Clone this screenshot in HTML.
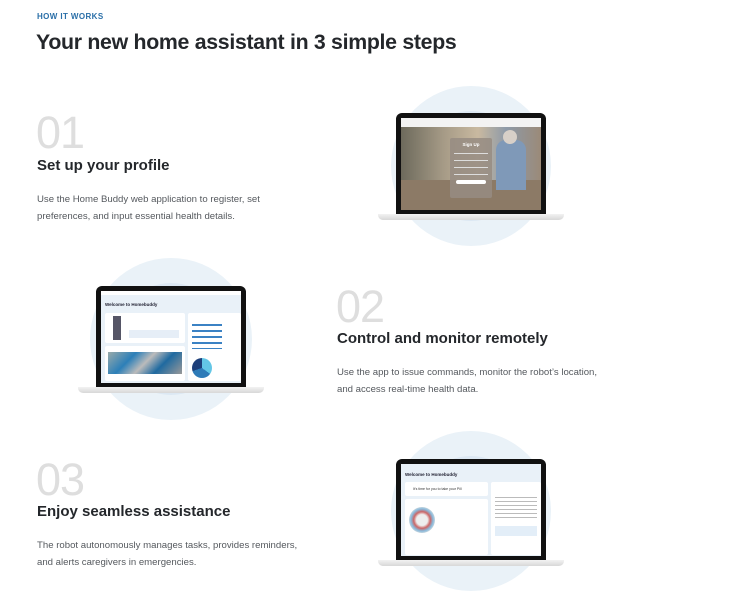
<!DOCTYPE html>
<html><head><meta charset="utf-8"><style>
*{margin:0;padding:0;box-sizing:border-box}
body{width:755px;height:607px;background:#fff;font-family:"Liberation Sans",Arial,sans-serif;position:relative;overflow:hidden}
.a{position:absolute}
.eb{left:37px;top:12px;font-size:8px;font-weight:bold;color:#2a6fa8;letter-spacing:.4px}
.t{left:36px;top:30px;font-size:21.3px;font-weight:bold;color:#24272b;letter-spacing:-.3px;white-space:nowrap}
.n{font-size:45px;color:#dedede;line-height:1;letter-spacing:-1px}
.h{font-size:15px;font-weight:bold;color:#24272b;white-space:nowrap}
.p{font-size:9.6px;color:#55595e;line-height:17px}
.c1{border-radius:50%;background:#eaf2f8}
.c2{border-radius:50%;background:#dce8f3}
.scr{background:#111;border-radius:6px 6px 0 0;overflow:hidden;padding:5px 5px 4px}
.in{width:100%;height:100%;background:#e9f1f8;position:relative;overflow:hidden}
.base{background:linear-gradient(#f2f2f2,#d8d8d8);border-radius:0 0 5px 5px;height:6px}
.card{position:absolute;background:#fff;border-radius:2px}
</style></head><body>
<div class="a eb">HOW IT WORKS</div>
<div class="a t">Your new home assistant in 3 simple steps</div>

<div class="a n" style="left:36px;top:110px">01</div>
<div class="a h" style="left:37px;top:157px">Set up your profile</div>
<div class="a p" style="left:37px;top:191px">Use the Home Buddy web application to register, set<br>preferences, and input essential health details.</div>

<div class="a n" style="left:336px;top:284px">02</div>
<div class="a h" style="left:337px;top:330px">Control and monitor remotely</div>
<div class="a p" style="left:337px;top:364px">Use the app to issue commands, monitor the robot’s location,<br>and access real-time health data.</div>

<div class="a n" style="left:36px;top:457px">03</div>
<div class="a h" style="left:37px;top:503px">Enjoy seamless assistance</div>
<div class="a p" style="left:37px;top:537px">The robot autonomously manages tasks, provides reminders,<br>and alerts caregivers in emergencies.</div>

<!-- laptop 1 -->
<div class="a c1" style="left:391px;top:86px;width:160px;height:160px"></div>
<div class="a c2" style="left:416px;top:111px;width:110px;height:110px"></div>
<div class="a scr" style="left:396px;top:113px;width:150px;height:101px">
 <div class="in" style="background:linear-gradient(90deg,#6d6a5c 0%,#a59a86 30%,#c9b9a0 55%,#8e9aa8 75%,#9b8a78 100%)">
  <div class="a" style="left:0;top:0;width:100%;height:9px;background:#f3f3f3"></div>
  <div class="a" style="left:0;top:62px;width:100%;height:30px;background:#8c7a66"></div>
  <div class="a" style="left:95px;top:22px;width:30px;height:50px;background:#7f99b8;border-radius:10px 10px 0 0"></div>
  <div class="a" style="left:102px;top:12px;width:14px;height:14px;background:#d8d0c8;border-radius:50%"></div>
  <div class="a" style="left:49px;top:20px;width:42px;height:60px;background:rgba(150,140,130,.85);border-radius:2px">
   <div style="color:#fff;font-size:4.5px;font-weight:bold;text-align:center;margin-top:4px">Sign Up</div>
   <div style="height:1px;background:#ddd;margin:6px 4px 0"></div>
   <div style="height:1px;background:#ddd;margin:6px 4px 0"></div>
   <div style="height:1px;background:#ddd;margin:6px 4px 0"></div>
   <div style="height:1px;background:#ddd;margin:6px 4px 0"></div>
   <div style="height:4px;background:#fff;border-radius:2px;margin:5px 6px 0"></div>
  </div>
 </div>
</div>
<div class="a base" style="left:378px;top:214px;width:186px"></div>

<!-- laptop 2 -->
<div class="a c1" style="left:90px;top:258px;width:162px;height:162px"></div>
<div class="a c2" style="left:115px;top:283px;width:112px;height:112px"></div>
<div class="a scr" style="left:96px;top:286px;width:150px;height:101px">
 <div class="in">
  <div class="a" style="left:0;top:0;width:100%;height:4px;background:#fff"></div>
  <div class="a" style="left:4px;top:11px;font-size:4.5px;font-weight:bold;color:#223">Welcome to Homebuddy</div>
  <div class="card" style="left:4px;top:22px;width:80px;height:30px">
   <div class="a" style="left:8px;top:3px;width:8px;height:24px;background:#556"></div>
   <div class="a" style="left:24px;top:17px;width:50px;height:8px;background:#e6eef7"></div>
  </div>
  <div class="card" style="left:4px;top:55px;width:80px;height:35px">
   <div class="a" style="left:3px;top:6px;width:74px;height:22px;background:linear-gradient(135deg,#9aa 0%,#2c7fb8 30%,#bbb 50%,#1f6aa0 70%,#999 100%)"></div>
  </div>
  <div class="card" style="left:87px;top:22px;width:53px;height:68px">
   <div class="a" style="left:4px;top:8px;width:30px;height:28px;background:repeating-linear-gradient(#fff 0 3px,#3b82c4 3px 5px,#fff 5px 6px)"></div>
   <div class="a" style="left:4px;top:45px;width:20px;height:20px;border-radius:50%;background:conic-gradient(#63c6e6 0 35%,#2e7bb8 35% 70%,#1d3f7a 70% 100%)"></div>
  </div>
 </div>
</div>
<div class="a base" style="left:78px;top:387px;width:186px"></div>

<!-- laptop 3 -->
<div class="a c1" style="left:391px;top:431px;width:160px;height:160px"></div>
<div class="a c2" style="left:416px;top:456px;width:110px;height:110px"></div>
<div class="a scr" style="left:396px;top:459px;width:150px;height:101px">
 <div class="in">
  <div class="a" style="left:4px;top:8px;font-size:4.5px;font-weight:bold;color:#223">Welcome to Homebuddy</div>
  <div class="card" style="left:4px;top:18px;width:83px;height:14px">
   <div class="a" style="left:8px;top:5px;font-size:3.5px;color:#333">It's time for you to take your Pill</div></div>
  <div class="card" style="left:4px;top:35px;width:83px;height:56px">
   <div class="a" style="left:4px;top:8px;width:26px;height:26px;border-radius:50%;background:radial-gradient(#eee 30%,#c66 45%,#8bd 60%,#ddd 75%)"></div>
  </div>
  <div class="card" style="left:90px;top:18px;width:50px;height:73px">
   <div class="a" style="left:4px;top:12px;width:42px;height:25px;background:repeating-linear-gradient(#fff 0 3px,#bbb 3px 4px)"></div>
   <div class="a" style="left:4px;top:44px;width:42px;height:10px;background:#e3eef8"></div>
  </div>
 </div>
</div>
<div class="a base" style="left:378px;top:560px;width:186px"></div>
</body></html>
